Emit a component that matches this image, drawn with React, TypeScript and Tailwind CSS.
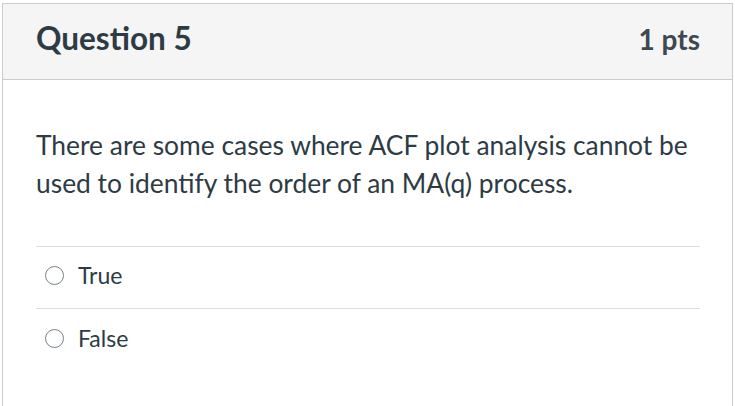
export default function App() {
  return (
    <div className="w-[735px] h-[406px] bg-white overflow-hidden pt-[3px] pl-[2px] pr-[2px]" style={{ fontFamily: 'Lato, "Liberation Sans", sans-serif' }}>
      <div className="border border-[#c7cdd1] h-[420px] text-[#2d3b45]">
        <div className="h-[76px] bg-[#f5f5f5] border-b border-[#c7cdd1] flex items-center justify-between pl-[33px] pr-[32px] pb-[6px]">
          <div className="text-[31.5px] font-bold leading-none">Question 5</div>
          <div className="text-[28px] font-bold leading-none text-[#3d4850]">1 pts</div>
        </div>
        <div className="pl-[33px] pr-[32px] pt-[46px]">
          <div className="text-[26.4px] leading-[38px]">
            There are some cases where ACF plot analysis cannot be used to identify the order of an MA(q) process.
          </div>
          <div className="mt-[44px] border-t border-[#dddddd]">
            <label className="flex items-center h-[62px] border-b border-[#dddddd] pl-[9px] pb-[4px]">
              <span className="w-[19px] h-[19px] rounded-full border-[1.5px] border-[#73818c] bg-white"></span>
              <span className="ml-[14px] text-[23px]">True</span>
            </label>
            <label className="flex items-center h-[62px] pl-[9px] pb-[4px]">
              <span className="w-[19px] h-[19px] rounded-full border-[1.5px] border-[#73818c] bg-white"></span>
              <span className="ml-[14px] text-[23px]">False</span>
            </label>
          </div>
        </div>
      </div>
    </div>
  );
}
